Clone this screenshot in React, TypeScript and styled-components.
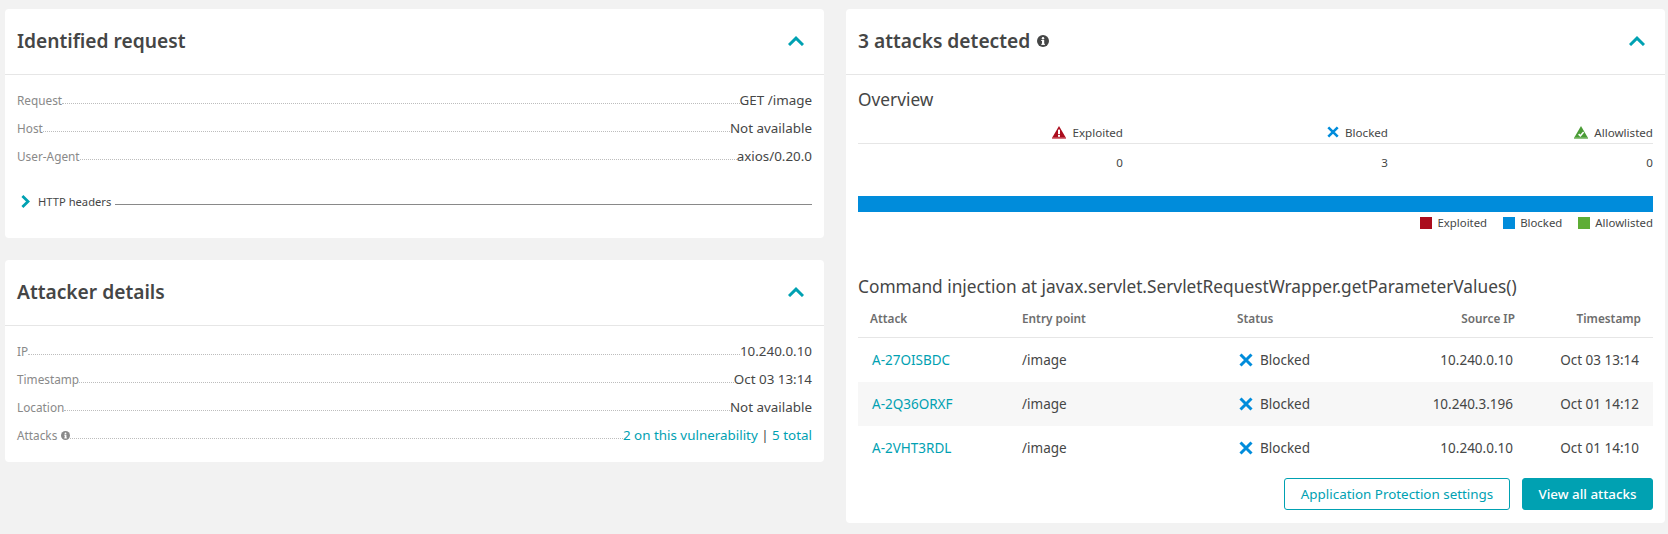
import React from "react";
import styled, { createGlobalStyle } from "styled-components";

const GlobalStyle = createGlobalStyle`
  html, body {
    margin: 0;
    padding: 0;
    background: #f2f2f2;
  }
  body {
    font-family: "Noto Sans", "Open Sans", sans-serif;
    color: #454646;
  }
`;

const TEAL = "#00a1b2";

const Page = styled.div`
  display: grid;
  grid-template-columns: 819px 819px;
  gap: 22px;
  align-items: start;
  padding: 9px 5px 0;
  width: 1668px;
  height: 534px;
  box-sizing: border-box;
  overflow: hidden;
`;

const Column = styled.div`
  display: flex;
  flex-direction: column;
  gap: 22px;
`;

const Card = styled.section<{ $height: number }>`
  background: #fff;
  border-radius: 4px;
  height: ${(p) => p.$height}px;
  box-sizing: border-box;
`;

const CardHeader = styled.header`
  display: flex;
  align-items: center;
  justify-content: space-between;
  height: 66px;
  box-sizing: border-box;
  padding: 0 20px 2px 12px;
  border-bottom: 1px solid #e6e6e6;
`;

const CardTitle = styled.h2`
  display: flex;
  align-items: center;
  gap: 7px;
  margin: 0;
  font-size: 19.2px;
  font-weight: 600;
  color: #454646;
`;

const DetailList = styled.div`
  padding: 11px 12px 0;
`;

const DetailRow = styled.div`
  display: flex;
  align-items: baseline;
  height: 28px;
  line-height: 28px;
  font-size: 11.8px;
`;

const DetailLabel = styled.span`
  display: inline-flex;
  align-items: center;
  gap: 4px;
  color: #898989;
`;

const Dots = styled.span`
  flex: 1;
  border-bottom: 1px dotted #bdbdbd;
  transform: translateY(-1px);
`;

const DetailValue = styled.span`
  color: #454646;
  font-size: 13.4px;
`;

const TealText = styled.span`
  color: ${TEAL};
`;

const Expander = styled.div`
  display: flex;
  align-items: center;
  margin: 24px 12px 0 16px;
  font-size: 11.2px;
  color: #454646;
`;

const ExpanderLabel = styled.span`
  margin: 0 4px 0 8px;
`;

const ExpanderLine = styled.span`
  flex: 1;
  height: 1px;
  background: #898989;
  transform: translateY(3px);
`;

const CardBody = styled.div`
  padding: 12px 12px 0;
`;

const SectionTitle = styled.h3`
  margin: 0;
  font-size: 17.3px;
  line-height: 26px;
  font-weight: 400;
  color: #454646;
`;

const SummaryGrid = styled.div`
  display: grid;
  grid-template-columns: repeat(3, 1fr);
  margin-top: 4px;
`;

const SummaryHead = styled.div`
  display: flex;
  align-items: center;
  justify-content: flex-end;
  gap: 6px;
  height: 22px;
  padding-top: 4px;
  font-size: 11.6px;
  border-bottom: 1px solid #e6e6e6;
`;

const SummaryValue = styled.div`
  text-align: right;
  font-size: 11.6px;
  line-height: 38px;
`;

const StackBar = styled.div`
  height: 16px;
  margin-top: 14px;
  background: #008cdb;
`;

const Legend = styled.div`
  display: flex;
  justify-content: flex-end;
  gap: 16px;
  margin-top: 2px;
  font-size: 11.4px;
  line-height: 17px;
`;

const LegendItem = styled.span`
  display: inline-flex;
  align-items: center;
  gap: 5px;
`;

const Swatch = styled.i<{ $color: string }>`
  display: block;
  width: 12px;
  height: 12px;
  background: ${(p) => p.$color};
`;

const AttackHeading = styled(SectionTitle)`
  margin-top: 43px;
`;

const TableRow = styled.div<{ $striped?: boolean }>`
  display: grid;
  grid-template-columns: 152px 215px 150px 152px 126px;
  align-items: center;
  height: 44px;
  font-size: 13.5px;
  background: ${(p) => (p.$striped ? "#f7f7f7" : "transparent")};
`;

const HeadRow = styled(TableRow)`
  height: 36px;
  font-size: 11.8px;
  font-weight: 600;
  color: #6d6d6d;
  border-bottom: 1px solid #e6e6e6;
  padding-bottom: 1px;
`;

const Cell = styled.div<{ $right?: boolean }>`
  display: flex;
  align-items: center;
  gap: 7px;
  padding: 0 14px;
  justify-content: ${(p) => (p.$right ? "flex-end" : "flex-start")};
`;

const EntryCell = styled(Cell)`
  padding-left: 12px;
`;

const HeadCell = styled(Cell)`
  padding: 0 12px;
`;

const AttackLink = styled.a`
  color: ${TEAL};
  text-decoration: none;
`;

const Actions = styled.div`
  display: flex;
  justify-content: flex-end;
  gap: 12px;
  margin-top: 8px;
`;

const Button = styled.button<{ $primary?: boolean }>`
  width: ${(p) => (p.$primary ? 131 : 226)}px;
  height: 32px;
  padding: 0;
  border: 1px solid ${TEAL};
  border-radius: 3px;
  font-family: inherit;
  font-size: 13.4px;
  font-weight: ${(p) => (p.$primary ? 500 : 400)};
  color: ${(p) => (p.$primary ? "#fff" : TEAL)};
  background: ${(p) => (p.$primary ? TEAL : "#fff")};
`;

function ChevronUp() {
  return (
    <svg width="16" height="10" viewBox="0 0 16 10">
      <path d="M1 9 8 2.2 15 9" fill="none" stroke={TEAL} strokeWidth="3" />
    </svg>
  );
}

function ChevronRight() {
  return (
    <svg width="9" height="13" viewBox="0 0 9 13">
      <path d="M1.4 1 7 6.5 1.4 12" fill="none" stroke={TEAL} strokeWidth="2.8" />
    </svg>
  );
}

function InfoIcon({ size, color }: { size: number; color: string }) {
  return (
    <svg width={size} height={size} viewBox="0 0 12 12">
      <circle cx="6" cy="6" r="6" fill={color} />
      <rect x="5" y="5" width="2.2" height="4.6" fill="#fff" />
      <rect x="4.2" y="5" width="1.5" height="1" fill="#fff" />
      <rect x="4.2" y="8.8" width="3.8" height="1" fill="#fff" />
      <circle cx="6" cy="3.2" r="1.2" fill="#fff" />
    </svg>
  );
}

function BlockedIcon({ size }: { size: number }) {
  return (
    <svg width={size} height={size} viewBox="0 0 14 14">
      <path d="M1.5 1.5 12.5 12.5M12.5 1.5 1.5 12.5" fill="none" stroke="#008cdb" strokeWidth="3" />
    </svg>
  );
}

function ExploitedIcon() {
  return (
    <svg width="14" height="13" viewBox="0 0 14 13">
      <path d="M7 0 14 12H0Z" fill="#ab0c1d" />
      <rect x="0" y="11.5" width="14" height="1.5" fill="#d5747e" />
      <rect x="6" y="3.6" width="2" height="4.6" fill="#fff" />
      <rect x="6" y="9" width="2" height="1.8" fill="#fff" />
    </svg>
  );
}

function AllowlistedIcon() {
  return (
    <svg width="14" height="13" viewBox="0 0 14 13">
      <path d="M7 0 14 12H0Z" fill="#4a9c36" />
      <rect x="0" y="11.5" width="14" height="1.5" fill="#8fc380" />
      <path d="M4.6 8.1 6.4 9.8 9.6 6" fill="none" stroke="#fff" strokeWidth="1.5" />
    </svg>
  );
}

const requestDetails = [
  ["Request", "GET /image"],
  ["Host", "Not available"],
  ["User-Agent", "axios/0.20.0"],
];

const attacks = [
  ["A-27OISBDC", "10.240.0.10", "Oct 03 13:14"],
  ["A-2Q36ORXF", "10.240.3.196", "Oct 01 14:12"],
  ["A-2VHT3RDL", "10.240.0.10", "Oct 01 14:10"],
];

export default function App() {
  return (
    <>
      <GlobalStyle />
      <Page>
        <Column>
          <Card $height={229}>
            <CardHeader>
              <CardTitle>Identified request</CardTitle>
              <ChevronUp />
            </CardHeader>
            <DetailList>
              {requestDetails.map(([label, value]) => (
                <DetailRow key={label}>
                  <DetailLabel>{label}</DetailLabel>
                  <Dots />
                  <DetailValue>{value}</DetailValue>
                </DetailRow>
              ))}
            </DetailList>
            <Expander>
              <ChevronRight />
              <ExpanderLabel>HTTP headers</ExpanderLabel>
              <ExpanderLine />
            </Expander>
          </Card>
          <Card $height={202}>
            <CardHeader>
              <CardTitle>Attacker details</CardTitle>
              <ChevronUp />
            </CardHeader>
            <DetailList>
              <DetailRow>
                <DetailLabel>IP</DetailLabel>
                <Dots />
                <DetailValue>10.240.0.10</DetailValue>
              </DetailRow>
              <DetailRow>
                <DetailLabel>Timestamp</DetailLabel>
                <Dots />
                <DetailValue>Oct 03 13:14</DetailValue>
              </DetailRow>
              <DetailRow>
                <DetailLabel>Location</DetailLabel>
                <Dots />
                <DetailValue>Not available</DetailValue>
              </DetailRow>
              <DetailRow>
                <DetailLabel>
                  Attacks <InfoIcon size={9} color="#898989" />
                </DetailLabel>
                <Dots />
                <DetailValue>
                  <TealText>2 on this vulnerability</TealText> | <TealText>5 total</TealText>
                </DetailValue>
              </DetailRow>
            </DetailList>
          </Card>
        </Column>
        <Card $height={514}>
          <CardHeader>
            <CardTitle>
              3 attacks detected <InfoIcon size={12} color="#454646" />
            </CardTitle>
            <ChevronUp />
          </CardHeader>
          <CardBody>
            <SectionTitle>Overview</SectionTitle>
            <SummaryGrid>
              <SummaryHead>
                <ExploitedIcon /> Exploited
              </SummaryHead>
              <SummaryHead>
                <BlockedIcon size={12} /> Blocked
              </SummaryHead>
              <SummaryHead>
                <AllowlistedIcon /> Allowlisted
              </SummaryHead>
              <SummaryValue>0</SummaryValue>
              <SummaryValue>3</SummaryValue>
              <SummaryValue>0</SummaryValue>
            </SummaryGrid>
            <StackBar />
            <Legend>
              <LegendItem>
                <Swatch $color="#ab0c1d" /> Exploited
              </LegendItem>
              <LegendItem>
                <Swatch $color="#008cdb" /> Blocked
              </LegendItem>
              <LegendItem>
                <Swatch $color="#5ead35" /> Allowlisted
              </LegendItem>
            </Legend>
            <AttackHeading>Command injection at javax.servlet.ServletRequestWrapper.getParameterValues()</AttackHeading>
            <HeadRow>
              <HeadCell>Attack</HeadCell>
              <HeadCell>Entry point</HeadCell>
              <HeadCell>Status</HeadCell>
              <HeadCell $right>Source IP</HeadCell>
              <HeadCell $right>Timestamp</HeadCell>
            </HeadRow>
            {attacks.map(([id, ip, time], i) => (
              <TableRow key={id} $striped={i === 1}>
                <Cell>
                  <AttackLink href="#">{id}</AttackLink>
                </Cell>
                <EntryCell>/image</EntryCell>
                <Cell>
                  <BlockedIcon size={14} /> Blocked
                </Cell>
                <Cell $right>{ip}</Cell>
                <Cell $right>{time}</Cell>
              </TableRow>
            ))}
            <Actions>
              <Button>Application Protection settings</Button>
              <Button $primary>View all attacks</Button>
            </Actions>
          </CardBody>
        </Card>
      </Page>
    </>
  );
}
